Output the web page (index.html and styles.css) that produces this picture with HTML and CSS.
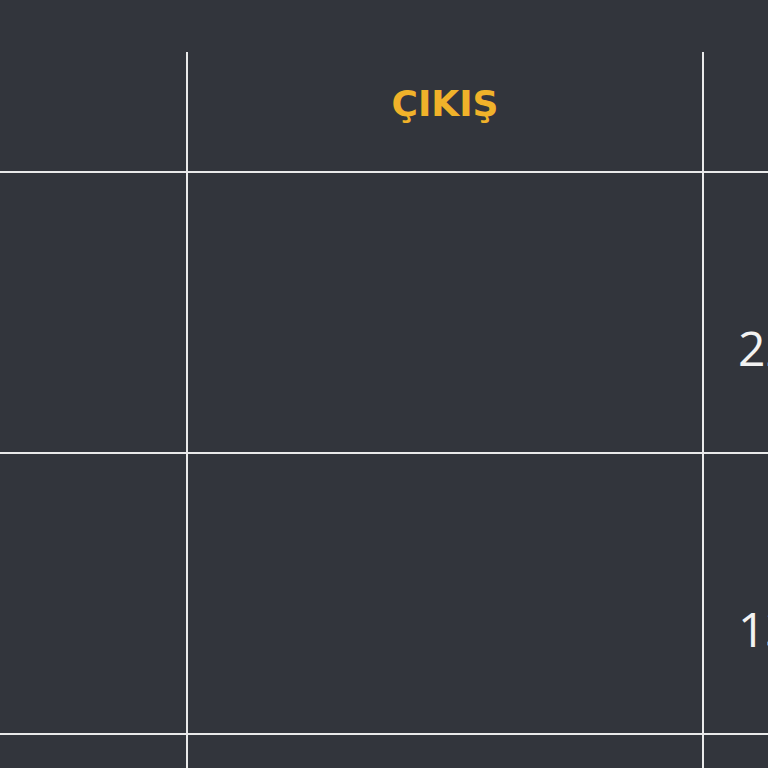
FILE: index.html
```html
<!DOCTYPE html>
<html lang="tr">
<head>
<meta charset="utf-8">
<title>Çıkış</title>
<link rel="stylesheet" href="styles.css">
</head>
<body>
<div class="table">
  <div class="cell head"></div>
  <div class="cell head title">ÇIKIŞ</div>
  <div class="cell head last"></div>

  <div class="cell row"></div>
  <div class="cell row"></div>
  <div class="cell row last num">22:45</div>

  <div class="cell row"></div>
  <div class="cell row"></div>
  <div class="cell row last num">13:20</div>

  <div class="cell row"></div>
  <div class="cell row"></div>
  <div class="cell row last num"></div>
</div>
</body>
</html>
```
FILE: styles.css
```css
html, body {
  margin: 0;
  padding: 0;
  background: #32353c;
  overflow: hidden;
  height: 768px;
}
body {
  font-family: "DejaVu Sans", Verdana, sans-serif;
  padding-top: 52px;
}
.table {
  display: grid;
  grid-template-columns: 188px 516px 300px;
  width: 1004px;
}
.cell {
  box-sizing: border-box;
  border-right: 2px solid #e9e9ea;
  border-bottom: 2px solid #e9e9ea;
}
.last {
  border-right: none;
}
.head {
  height: 121px;
}
.row {
  height: 281px;
}
.title {
  color: #f0b22a;
  font-weight: bold;
  font-size: 36px;
  line-height: 42px;
  padding-top: 31px;
  text-align: center;
}
.num {
  color: #f2f2f2;
  font-family: "Open Sans", "DejaVu Sans", sans-serif;
  font-size: 48px;
  line-height: 65px;
  padding-top: 142px;
  padding-left: 34px;
  white-space: nowrap;
}
```
